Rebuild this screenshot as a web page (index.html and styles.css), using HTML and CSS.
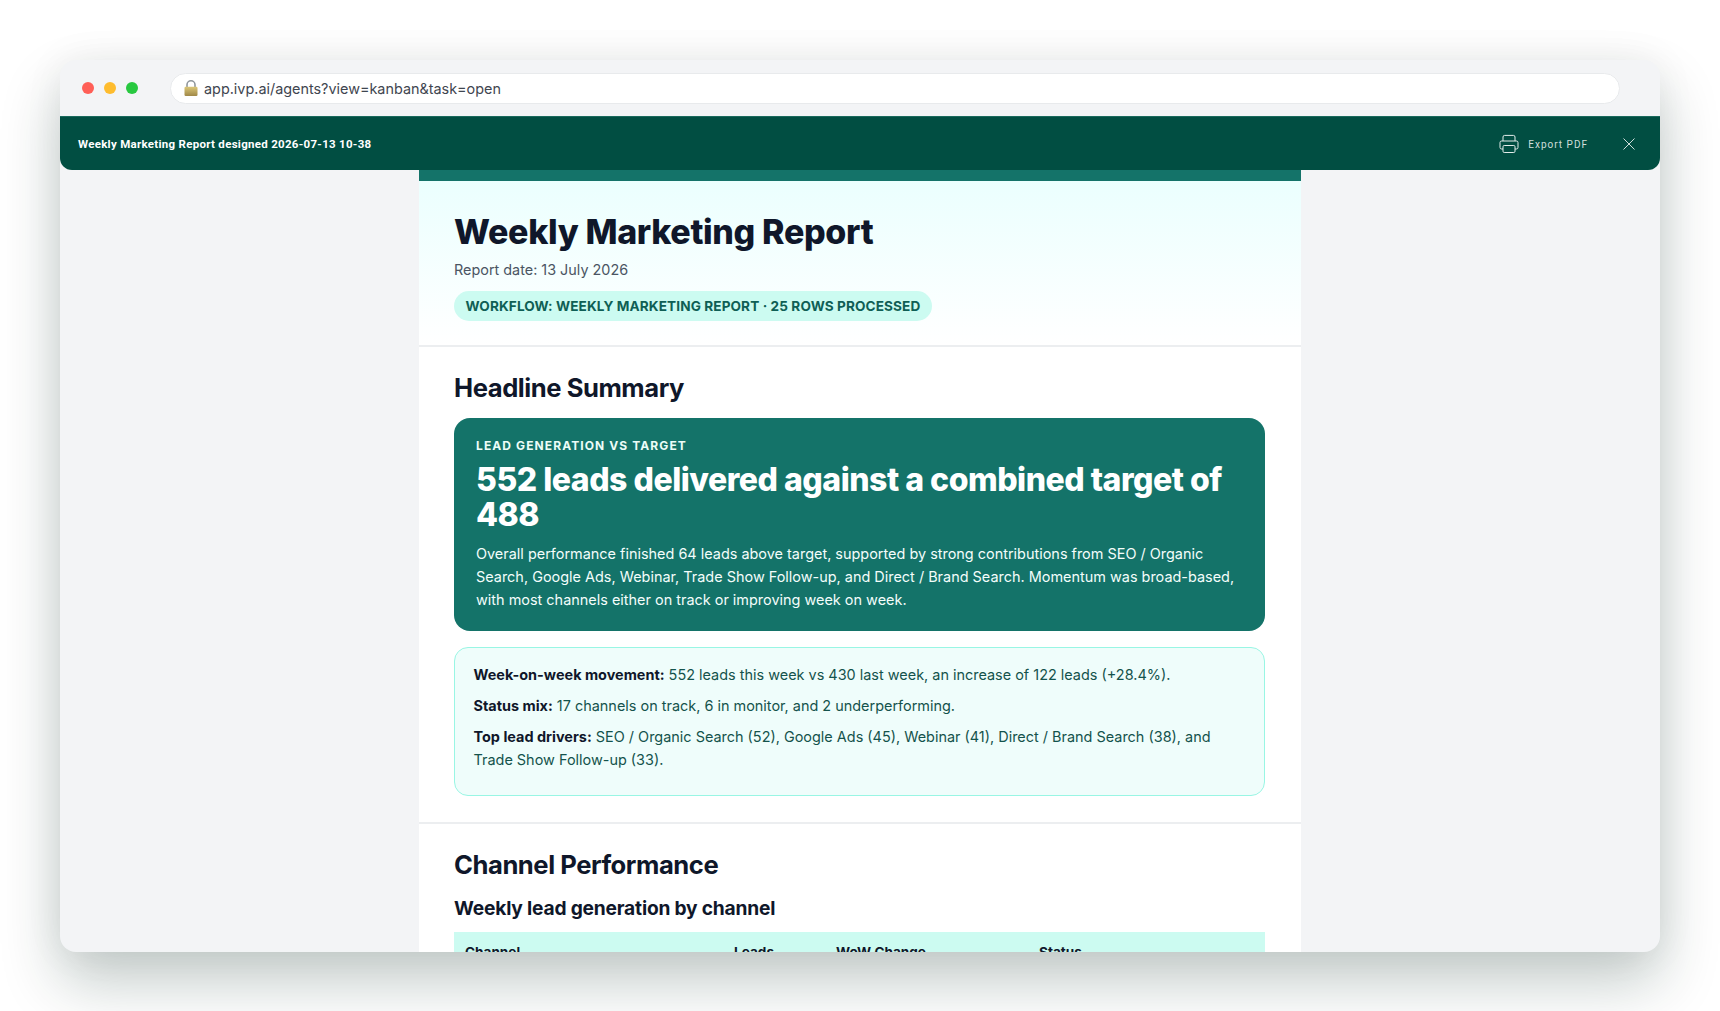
FILE: index.html
```html
<!DOCTYPE html>
<html lang="en">
<head>
<meta charset="utf-8">
<title>Weekly Marketing Report</title>
<link rel="stylesheet" href="styles.css">
</head>
<body>
<div class="window">
  <div class="chrome">
    <div class="lights"><span class="light red"></span><span class="light amber"></span><span class="light green"></span></div>
    <div class="address">
      <svg class="lock" width="14" height="16" viewBox="0 0 14 16" aria-hidden="true">
        <defs><linearGradient id="lockbody" x1="0" y1="0" x2="0" y2="1"><stop offset="0" stop-color="#dcc778"/><stop offset="1" stop-color="#a08848"/></linearGradient></defs>
        <path d="M3 7.5V4.8a4 4 0 0 1 8 0v2.7" fill="none" stroke="#8f969c" stroke-width="1.6"/>
        <rect x="0.5" y="6.8" width="13" height="9.2" rx="1.2" fill="url(#lockbody)"/>
      </svg>
      <span>app.ivp.ai/agents?view=kanban&amp;task=open</span>
    </div>
  </div>
  <div class="topbar">
    <div class="topbar-title">Weekly Marketing Report designed 2026-07-13 10-38</div>
    <div class="topbar-actions">
      <div class="export">
        <svg width="20" height="20" viewBox="0 0 20 20" fill="none" stroke="#e3ecea" stroke-width="1" aria-hidden="true">
          <path d="M4 7V3a1.6 1.6 0 0 1 1.6-1.6h8.8A1.6 1.6 0 0 1 16 3v4"/>
          <path d="M4 15H2.6A1.6 1.6 0 0 1 1 13.4V8.6A1.6 1.6 0 0 1 2.6 7h14.8A1.6 1.6 0 0 1 19 8.6v4.8a1.6 1.6 0 0 1-1.6 1.6H16"/>
          <rect x="4" y="11.5" width="12" height="7" rx="1.2"/>
        </svg>
        <span class="export-label">Export PDF</span>
      </div>
      <svg class="close" width="12" height="12" viewBox="0 0 12 12" fill="none" stroke="#cfdedb" stroke-width="1" aria-hidden="true"><path d="M.5.5l11 11M11.5.5l-11 11"/></svg>
    </div>
  </div>
  <div class="viewer">
    <main class="report">
      <header class="hero">
        <h1>Weekly Marketing Report</h1>
        <p class="date">Report date: 13 July 2026</p>
        <span class="pill">WORKFLOW: WEEKLY MARKETING REPORT · 25 ROWS PROCESSED</span>
      </header>
      <section class="section">
        <h2>Headline Summary</h2>
        <div class="callout">
          <div class="eyebrow">LEAD GENERATION VS TARGET</div>
          <div class="callout-title">552 leads delivered against a combined target of 488</div>
          <p>Overall performance finished 64 leads above target, supported by strong contributions from SEO / Organic Search, Google Ads, Webinar, Trade Show Follow-up, and Direct / Brand Search. Momentum was broad-based, with most channels either on track or improving week on week.</p>
        </div>
        <div class="notes">
          <p><strong>Week-on-week movement:</strong> 552 leads this week vs 430 last week, an increase of 122 leads (+28.4%).</p>
          <p><strong>Status mix:</strong> 17 channels on track, 6 in monitor, and 2 underperforming.</p>
          <p><strong>Top lead drivers:</strong> SEO / Organic Search (52), Google Ads (45), Webinar (41), Direct / Brand Search (38), and Trade Show Follow-up (33).</p>
        </div>
      </section>
      <section class="section channel">
        <h2>Channel Performance</h2>
        <h3>Weekly lead generation by channel</h3>
        <table>
          <thead><tr><th class="c1">Channel</th><th class="c2">Leads</th><th class="c3">WoW Change</th><th>Status</th></tr></thead>
        </table>
      </section>
    </main>
  </div>
</div>
</body>
</html>
```
FILE: styles.css
```css
* { box-sizing: border-box; }
html, body { margin: 0; height: 100%; }
body {
  background: #fff;
  padding: 60px;
  height: 1011px;
  overflow: hidden;
  font-family: Inter, "Liberation Sans", sans-serif;
}
.window {
  height: 892px;
  display: flex;
  flex-direction: column;
  background: #f3f4f6;
  border-radius: 16px;
  overflow: hidden;
  box-shadow: 0 30px 60px rgba(10, 40, 35, 0.24), 0 0 40px rgba(10, 40, 35, 0.06);
}
.chrome {
  height: 56px;
  flex: none;
  display: flex;
  align-items: flex-start;
  padding: 13px 40px 0 22px;
}
.lights { display: flex; gap: 10px; padding-top: 9px; width: 88px; flex: none; }
.light { width: 12px; height: 12px; border-radius: 50%; }
.red { background: #ff5f57; }
.amber { background: #febc2e; }
.green { background: #28c840; }
.address {
  flex: 1;
  height: 31px;
  background: #fff;
  border: 1px solid #e8eaec;
  border-radius: 16px;
  display: flex;
  align-items: center;
  gap: 6px;
  padding-left: 13px;
  font-size: 14.4px;
  color: #3f4650;
}
.lock { flex: none; margin-top: -1px; }
.topbar {
  height: 54px;
  flex: none;
  background: #014e42;
  border-radius: 0 0 12px 12px;
  display: flex;
  align-items: center;
  justify-content: space-between;
  padding: 0 25px 0 18px;
  position: relative;
  z-index: 1;
  border-top: 1px solid #1a6a5d;
}
.topbar-title {
  font-family: Roboto, sans-serif;
  color: #fff;
  font-size: 11.5px;
  font-weight: 700;
  letter-spacing: 0.29px;
}
.topbar-actions { display: flex; align-items: center; gap: 35px; }
.export {
  display: flex;
  align-items: center;
  gap: 9px;
  font-family: Roboto, sans-serif;
  font-size: 10px;
  letter-spacing: 1px;
  color: #cfdedb;
}
.export-label { padding-top: 2px; }
.viewer { flex: 1; min-height: 0; display: flex; justify-content: center; overflow: hidden; }
.report {
  width: 882px;
  height: 100%;
  margin-right: 1px;
  background: #fff;
  border-top: 11px solid #147369;
  overflow: hidden;
}
.hero {
  height: 166px;
  padding: 30px 35.5px 0;
  background: linear-gradient(180deg, #ebfffe 0%, #ffffff 100%);
  border-bottom: 2px solid #eceef0;
}
h1 {
  margin: 0;
  font-size: 34px;
  line-height: 42px;
  font-weight: 800;
  letter-spacing: -0.34px;
  color: #0f172a;
}
.date { margin: 5px 0 0; font-size: 14.4px; line-height: 24px; color: #4b5563; }
.pill {
  display: inline-block;
  margin-top: 9px;
  height: 30px;
  padding: 0 12px 0 11.5px;
  border-radius: 15px;
  background: #ccfbf1;
  color: #0f5f55;
  font-size: 13.6px;
  font-weight: 700;
  line-height: 30px;
  letter-spacing: 0.1px;
}
.section { padding: 25px 35.5px 26px; border-bottom: 2px solid #eceef0; }
h2 {
  margin: 0;
  font-size: 25.6px;
  line-height: 32px;
  font-weight: 700;
  letter-spacing: -0.45px;
  color: #0f172a;
}
.callout {
  margin-top: 14px;
  height: 213px;
  padding: 20px 22px 0;
  background: #147369;
  border-radius: 16px;
  color: #fff;
}
.eyebrow { font-size: 12px; line-height: 16px; font-weight: 700; letter-spacing: 1.1px; color: #ecfdf8; }
.callout-title { margin-top: 8px; font-size: 32px; line-height: 35px; font-weight: 800; letter-spacing: -0.48px; }
.callout p { margin: 10px 0 0; font-size: 14.45px; line-height: 23px; color: #f3fdfb; }
.notes {
  margin-top: 16px;
  height: 149px;
  padding: 15px 18.5px 0;
  background: #effdfb;
  border: 1px solid #99f6e4;
  border-radius: 14px;
  font-size: 14.45px;
  line-height: 23px;
  color: #14534c;
}
.notes p { margin: 0 0 8px; }
.notes strong { color: #0f172a; font-weight: 700; }
.channel { padding-top: 25px; border-bottom: 0; }
h3 {
  margin: 13px 0 0;
  font-size: 19.2px;
  line-height: 28px;
  font-weight: 700;
  letter-spacing: -0.2px;
  color: #0f172a;
}
table { margin-top: 10px; width: 100%; border-collapse: collapse; background: #ccfbf1; }
th {
  text-align: left;
  padding: 11px 11px;
  font-size: 13.6px;
  line-height: 18px;
  font-weight: 700;
  color: #0f172a;
}
.c1 { width: 269px; }
.c2 { width: 102px; }
.c3 { width: 203px; }
```
